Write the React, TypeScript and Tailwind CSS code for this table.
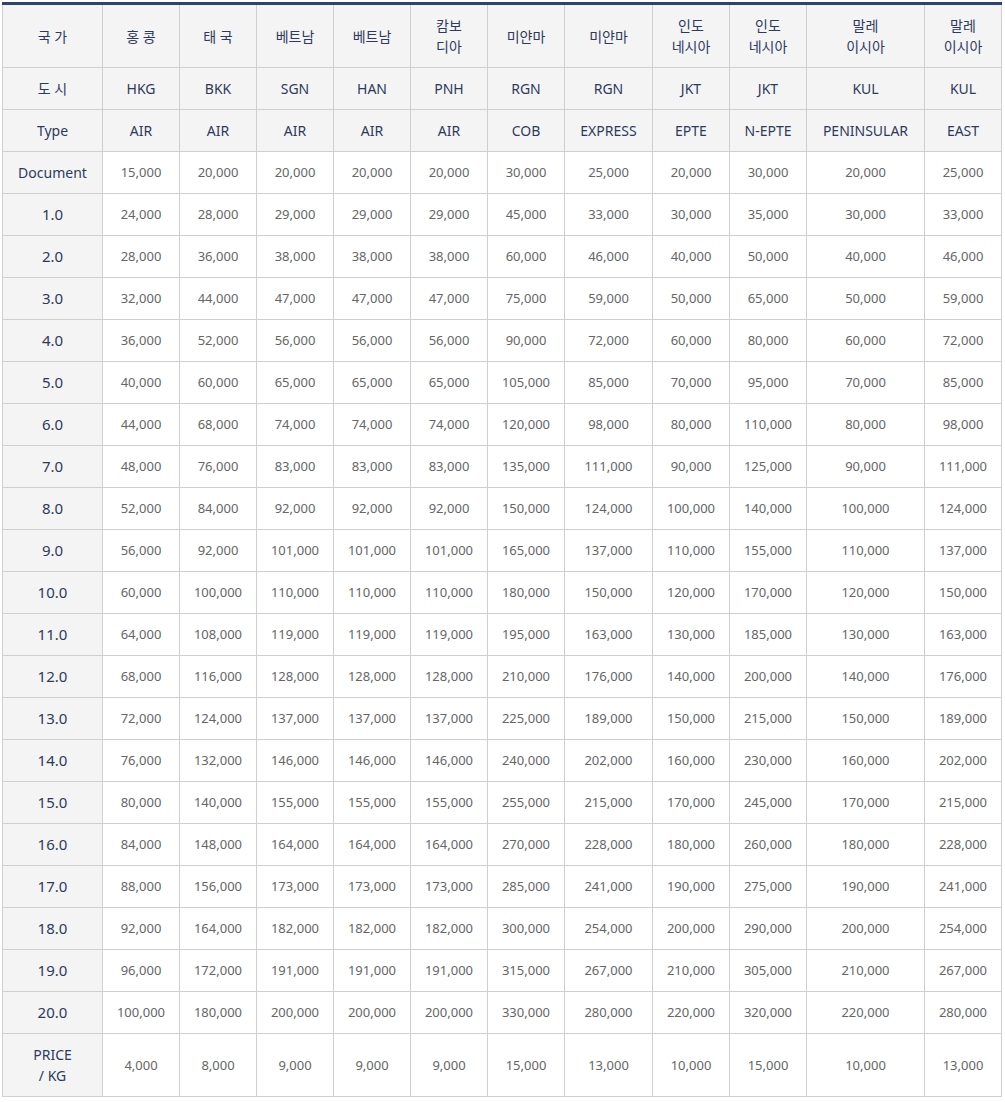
const countries = [
  ["홍 콩"],
  ["태 국"],
  ["베트남"],
  ["베트남"],
  ["캄보", "디아"],
  ["미얀마"],
  ["미얀마"],
  ["인도", "네시아"],
  ["인도", "네시아"],
  ["말레", "이시아"],
  ["말레", "이시아"],
];
const cities = ["HKG", "BKK", "SGN", "HAN", "PNH", "RGN", "RGN", "JKT", "JKT", "KUL", "KUL"];
const types = ["AIR", "AIR", "AIR", "AIR", "AIR", "COB", "EXPRESS", "EPTE", "N-EPTE", "PENINSULAR", "EAST"];
const widths = ["w-[100px]", "w-[77px]", "w-[77px]", "w-[77px]", "w-[77px]", "w-[77px]", "w-[77px]", "w-[88px]", "w-[77px]", "w-[77px]", "w-[118px]", "w-[77px]"];

// [document, base, per kg] for each column; weights 1..20 are base + kg * n
const base = [
  [15000, 20000, 4000],
  [20000, 20000, 8000],
  [20000, 20000, 9000],
  [20000, 20000, 9000],
  [20000, 20000, 9000],
  [30000, 30000, 15000],
  [25000, 20000, 13000],
  [20000, 20000, 10000],
  [30000, 20000, 15000],
  [20000, 20000, 10000],
  [25000, 20000, 13000],
];

const fmt = (n: number) => n.toLocaleString("en-US");

const rows: { label: string; values: string[] }[] = [
  { label: "Document", values: base.map((b) => fmt(b[0])) },
  ...Array.from({ length: 20 }, (_, i) => ({
    label: `${i + 1}.0`,
    values: base.map((b) => fmt(b[1] + b[2] * (i + 1))),
  })),
];

const th = "border border-[#cfcfcf] bg-[#f4f4f4] px-1 py-[10px] text-center align-middle text-[14px] leading-[21px] font-normal text-[#2e3a5c]";
const td = "border border-[#cfcfcf] bg-white px-1 py-[10px] text-center align-middle text-[13px] leading-[21px] text-[#666666]";

export default function App() {
  return (
    <div className="min-h-screen bg-white pt-[2px] pl-[2px]" style={{ fontFamily: '"Noto Sans", "Noto Sans CJK KR", sans-serif' }}>
      <table className="w-[999px] table-fixed border-collapse border-t-[3px] border-t-[#2e4470]">
        <colgroup>
          {widths.map((w, i) => (
            <col key={i} className={w} />
          ))}
        </colgroup>
        <thead>
          <tr>
            <th className={`${th} border-t-[3px] border-t-[#2e4470]`}>국 가</th>
            {countries.map((c, i) => (
              <th key={i} className={`${th} border-t-[3px] border-t-[#2e4470]`}>
                {c.map((line, j) => (
                  <div key={j}>{line}</div>
                ))}
              </th>
            ))}
          </tr>
          <tr>
            <th className={th}>도 시</th>
            {cities.map((c, i) => (
              <th key={i} className={th}>{c}</th>
            ))}
          </tr>
          <tr>
            <th className={th}>Type</th>
            {types.map((c, i) => (
              <th key={i} className={th}>{c}</th>
            ))}
          </tr>
        </thead>
        <tbody>
          {rows.map((r) => (
            <tr key={r.label}>
              <th className={`${th} ${r.label === "Document" ? "" : "text-[15px]"}`}>{r.label}</th>
              {r.values.map((v, i) => (
                <td key={i} className={td}>{v}</td>
              ))}
            </tr>
          ))}
          <tr>
            <th className={th}>
              <div>PRICE</div>
              <div>/ KG</div>
            </th>
            {base.map((b, i) => (
              <td key={i} className={td}>{fmt(b[2])}</td>
            ))}
          </tr>
        </tbody>
      </table>
    </div>
  );
}
